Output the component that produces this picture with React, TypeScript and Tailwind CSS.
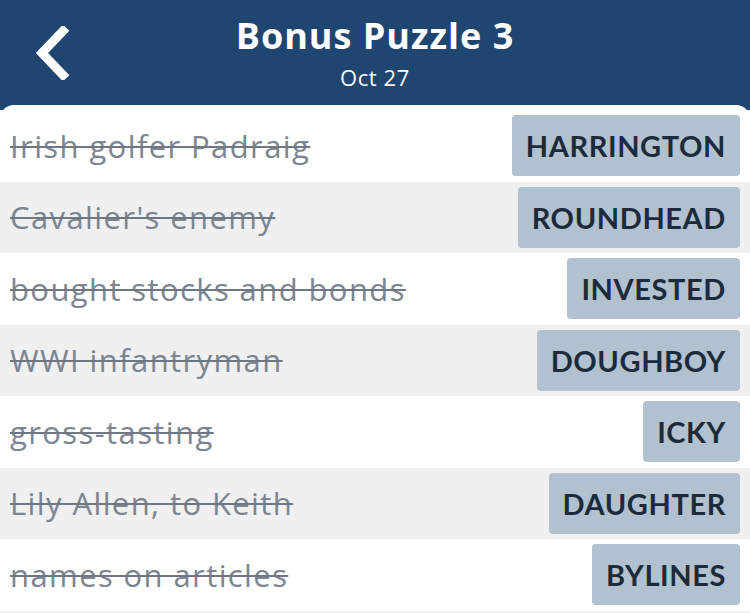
import React from "react";

const clues = [
  { clue: "Irish golfer Padraig", answer: "HARRINGTON" },
  { clue: "Cavalier's enemy", answer: "ROUNDHEAD" },
  { clue: "bought stocks and bonds", answer: "INVESTED" },
  { clue: "WWI infantryman", answer: "DOUGHBOY" },
  { clue: "gross-tasting", answer: "ICKY" },
  { clue: "Lily Allen, to Keith", answer: "DAUGHTER" },
  { clue: "names on articles", answer: "BYLINES" },
];

function BackIcon() {
  return (
    <svg width="36" height="54" viewBox="0 0 36 54" fill="none">
      <path
        d="M29 5 L8 27 L29 49"
        stroke="white"
        strokeWidth="9"
        strokeLinecap="square"
        strokeLinejoin="miter"
      />
    </svg>
  );
}

export default function App() {
  return (
    <div className="w-[750px] h-[613px] overflow-hidden bg-[#1f4571] font-['Lato',sans-serif]">
      <header className="relative h-[105px] flex flex-col items-center text-white">
        <button className="absolute left-[34px] top-[26px]">
          <BackIcon />
        </button>
        <h1 className="mt-[13px] text-[36px] leading-[46px] font-bold font-['Open_Sans',sans-serif] tracking-[1px]">
          Bonus Puzzle 3
        </h1>
        <p className="mt-[5px] text-[22px] leading-[26px] tracking-[0.6px] font-['Open_Sans',sans-serif]">
          Oct 27
        </p>
      </header>

      <div className="bg-white rounded-t-[14px] pt-[5px]">
        {clues.map((c, i) => (
          <div
            key={c.answer}
            className={`h-[71.5px] flex items-center justify-between pl-[10px] pr-[10px] ${
              i % 2 === 1 ? "bg-[#f0f0f0]" : "bg-white"
            }`}
          >
            <span className="text-[31px] tracking-[1.4px] text-[#7c8590] font-['Open_Sans',sans-serif] line-through decoration-[#6f7882] decoration-[1.5px]">
              {c.clue}
            </span>
            <span className="h-[61px] px-[14px] flex items-center rounded-[4px] bg-[#b1c1cf] text-[#1c2b3c] text-[29px] font-bold tracking-[0.6px]">
              {c.answer}
            </span>
          </div>
        ))}
        <div className="h-[10px] bg-[#f0f0f0]" />
      </div>
    </div>
  );
}
